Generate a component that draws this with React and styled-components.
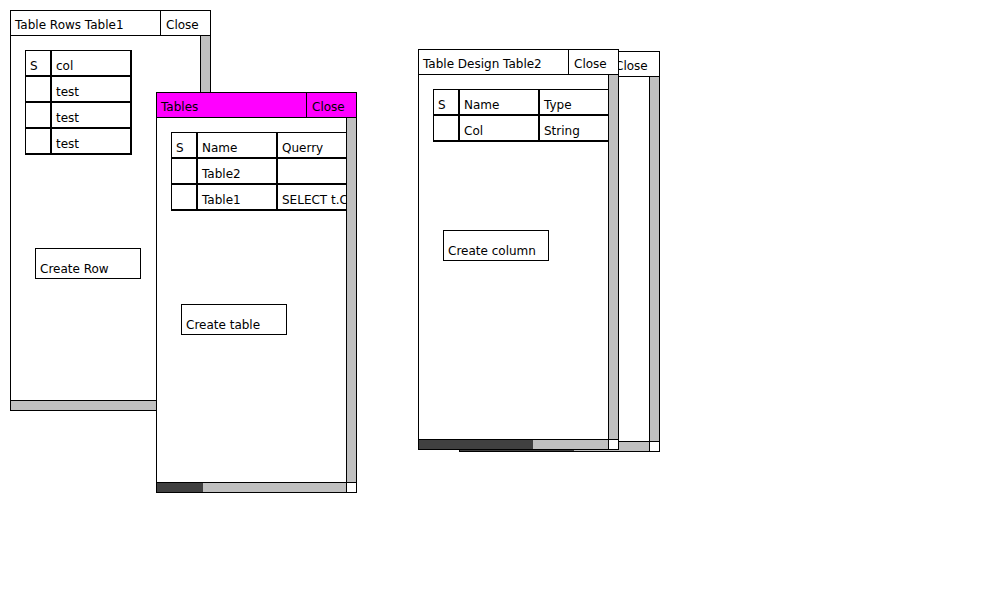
import React from 'react'
import styled, { createGlobalStyle } from 'styled-components'

const GlobalStyle = createGlobalStyle`
  html, body {
    margin: 0;
    padding: 0;
    background: #fff;
  }
  body {
    font-family: "DejaVu Sans", "Liberation Sans", sans-serif;
    font-size: 12px;
    color: #000;
  }
`

const windows = [
  {
    id: 'rows',
    x: 10,
    y: 10,
    title: 'Table Rows Table1',
    cols: ['26px', '80px'],
    rows: [['S', 'col'], ['', 'test'], ['', 'test'], ['', 'test']],
    button: 'Create Row',
    gap: 93,
    thumb: 0
  },
  {
    id: 'tables',
    x: 156,
    y: 92,
    title: 'Tables',
    active: true,
    cols: ['26px', '80px', '80px'],
    rows: [
      ['S', 'Name', 'Querry'],
      ['', 'Table2', ''],
      ['', 'Table1', 'SELECT t.Col FROM Table1 t']
    ],
    button: 'Create table',
    gap: 93,
    thumb: 46
  },
  {
    id: 'design1',
    x: 459,
    y: 51,
    title: 'Table Design Table1',
    cols: [],
    rows: [],
    thumb: 114
  },
  {
    id: 'design2',
    x: 418,
    y: 49,
    title: 'Table Design Table2',
    cols: ['26px', '80px', '80px'],
    rows: [['S', 'Name', 'Type'], ['', 'Col', 'String']],
    button: 'Create column',
    gap: 88,
    thumb: 114
  }
]

const Frame = ({ win }) =>
  <Window $x={win.x} $y={win.y}>
    <TitleBar $active={win.active}>
      <Title>{win.title}</Title>
      <CloseButton>Close</CloseButton>
    </TitleBar>
    <Body>
      <Content>
        {win.rows.length > 0 &&
          <Grid $cols={win.cols.join(' ')}>
            {win.rows.map((row, r) =>
              row.map((cell, c) => <Cell key={r + '-' + c}>{cell}</Cell>)
            )}
          </Grid>}
        {win.button && <ActionButton $gap={win.gap}>{win.button}</ActionButton>}
      </Content>
      <VScroll />
    </Body>
    <HScroll>
      <Track>
        {win.thumb > 0 && <Thumb style={{ width: win.thumb }} />}
      </Track>
      <Corner />
    </HScroll>
  </Window>

const App = () =>
  <>
    <GlobalStyle />
    <Desktop>
      {windows.map(win => <Frame key={win.id} win={win} />)}
    </Desktop>
  </>

export default App

const Desktop = styled.div`
  position: relative;
  width: 1000px;
  height: 600px;
  overflow: hidden;
`

const Window = styled.div`
  position: absolute;
  left: ${p => p.$x}px;
  top: ${p => p.$y}px;
  width: 201px;
  height: 401px;
  box-sizing: border-box;
  border: 1px solid #000;
  background: #fff;
  display: flex;
  flex-direction: column;
`

const TitleBar = styled.div`
  display: flex;
  height: 25px;
  flex: 0 0 25px;
  box-sizing: border-box;
  border-bottom: 1px solid #000;
  background: ${p => p.$active ? '#ff00ff' : '#fff'};
  line-height: 14px;
`

const Title = styled.div`
  width: 150px;
  box-sizing: border-box;
  border-right: 1px solid #000;
  padding: 7px 0 0 4px;
  white-space: nowrap;
  overflow: hidden;
`

const CloseButton = styled.div`
  flex: 1;
  padding: 7px 0 0 5px;
  white-space: nowrap;
  overflow: hidden;
`

const Body = styled.div`
  flex: 1;
  display: flex;
  min-height: 0;
`

const Content = styled.div`
  flex: 1;
  min-width: 0;
  overflow: hidden;
  padding: 14px;
`

const VScroll = styled.div`
  width: 10px;
  box-sizing: border-box;
  border-left: 1px solid #000;
  background: #c0c0c0;
`

const HScroll = styled.div`
  display: flex;
  height: 10px;
  flex: 0 0 10px;
  box-sizing: border-box;
  border-top: 1px solid #000;
`

const Track = styled.div`
  flex: 1;
  display: flex;
  background: #c0c0c0;
`

const Thumb = styled.div`
  background: #404040;
`

const Corner = styled.div`
  width: 10px;
  box-sizing: border-box;
  border-left: 1px solid #000;
  background: #fff;
`

const Grid = styled.div`
  display: grid;
  grid-template-columns: ${p => p.$cols};
  width: max-content;
  border-top: 1px solid #000;
  border-left: 1px solid #000;
`

const Cell = styled.div`
  height: 26px;
  box-sizing: border-box;
  border-right: 2px solid #000;
  border-bottom: 2px solid #000;
  padding: 8px 0 0 4px;
  line-height: 14px;
  white-space: nowrap;
  overflow: hidden;
`

const ActionButton = styled.button`
  display: block;
  width: 106px;
  height: 31px;
  box-sizing: border-box;
  margin: ${p => p.$gap}px 0 0 10px;
  padding: 13px 4px 2px;
  border: 1px solid #000;
  border-radius: 0;
  background: #fff;
  color: #000;
  font: inherit;
  line-height: 14px;
  text-align: left;
`
